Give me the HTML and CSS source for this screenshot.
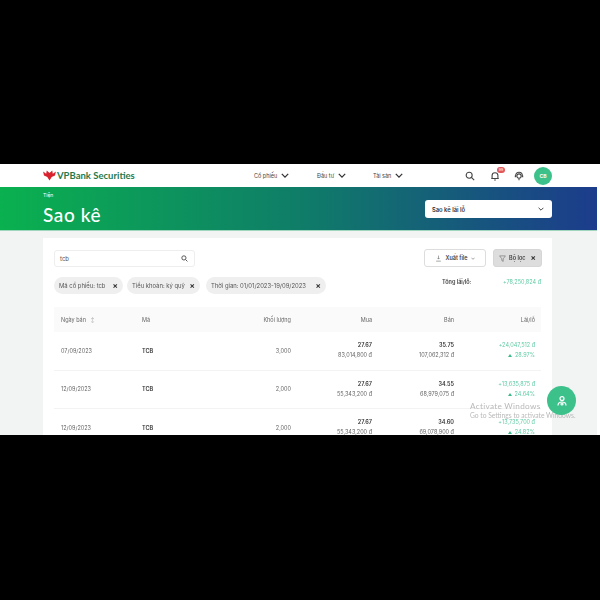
FILE: index.html
```html
<!DOCTYPE html>
<html lang="vi">
<head>
<meta charset="utf-8">
<title>Sao kê</title>
<link rel="stylesheet" href="styles.css">
</head>
<body>
<div class="frame">
  <div class="app">
    <header class="topbar">
      <div class="brand">
        <svg class="logo" viewBox="0 0 14 12"><path d="M7 11.500 4.600 7.600 1 6 0 1.500 3.400 4 4 .6 7 3.400 10 .6l.6 3.400L14 1.500 13 6 9.400 7.600Z" fill="#d8232f"/></svg>
        <span class="brand-name">VPBank Securities</span>
      </div>
      <nav class="menu">
        <span class="menu-item menu-a">Cổ phiếu <svg class="chev" viewBox="0 0 10 6"><path d="M1 1l4 4 4-4"/></svg></span>
        <span class="menu-item menu-b">Đầu tư <svg class="chev" viewBox="0 0 10 6"><path d="M1 1l4 4 4-4"/></svg></span>
        <span class="menu-item">Tài sản <svg class="chev" viewBox="0 0 10 6"><path d="M1 1l4 4 4-4"/></svg></span>
      </nav>
      <div class="tools">
        <svg class="tool" viewBox="0 0 12 12"><circle cx="5" cy="5" r="3.600"/><path d="M8 8l3 3"/></svg>
        <span class="bell">
          <svg class="tool" viewBox="0 0 12 12"><path d="M2.500 9V5.500a3.500 3.500 0 0 1 7 0V9ZM1.500 9h9M5 10.800h2"/></svg>
          <span class="badge">99</span>
        </span>
        <svg class="tool" viewBox="0 0 12 12"><path d="M2 7V5.500a4 4 0 0 1 8 0V7"/><circle cx="6" cy="6" r="2.600"/><path d="M1.600 5.500v2M10.400 5.500v2M6 9v2"/></svg>
        <span class="avatar">CB</span>
      </div>
    </header>

    <section class="hero">
      <div>
        <div class="crumb">Tiện</div>
        <h1 class="title">Sao kê</h1>
      </div>
      <div class="select">Sao kê lãi lỗ <svg class="chev-small" viewBox="0 0 10 6"><path d="M1 1l4 4 4-4"/></svg></div>
    </section>

    <main class="content">
      <div class="card">
        <div class="toolbar">
          <div class="search">
            <span>tcb</span>
            <svg class="search-icon" viewBox="0 0 12 12"><circle cx="5" cy="5" r="3.600"/><path d="M8 8l3 3"/></svg>
          </div>
          <div class="actions">
            <button class="btn"><svg class="btn-icon" viewBox="0 0 12 12"><path d="M6 1v6M4 5l2 2 2-2M2 10.500h8"/></svg>Xuất file <svg class="chev-tiny" viewBox="0 0 10 6"><path d="M1 1l4 4 4-4"/></svg></button>
            <button class="btn btn-filter"><svg class="btn-icon" viewBox="0 0 12 12"><path d="M1 1.500h10L7.200 6.500V11L4.800 9.500v-3Z"/></svg>Bộ lọc <span class="x">×</span></button>
          </div>
        </div>
        <div class="filters">
          <div class="chips">
            <span class="chip chip-a">Mã cổ phiếu: tcb <span class="x">×</span></span>
            <span class="chip chip-b">Tiểu khoản: ký quỹ <span class="x">×</span></span>
            <span class="chip chip-c">Thời gian: 01/01/2023-19/09/2023 <span class="x">×</span></span>
          </div>
          <div class="total"><b>Tổng lãi/lỗ:</b><span class="gain">+78,250,824 đ</span></div>
        </div>
        <div class="table">
          <div class="row head">
            <span>Ngày bán <span class="sort">↕</span></span><span>Mã</span><span class="r">Khối lượng</span><span class="r">Mua</span><span class="r">Bán</span><span class="r">Lãi/lỗ</span>
          </div>
          <div class="row">
            <span>07/09/2023</span><b>TCB</b><span class="r">3,000</span>
            <span class="r two"><b>27.67</b><span>83,014,800 đ</span></span>
            <span class="r two"><b>35.75</b><span>107,062,312 đ</span></span>
            <span class="r two gain"><span>+24,047,512 đ</span><span><i class="up"></i>28.97%</span></span>
          </div>
          <div class="row">
            <span>12/09/2023</span><b>TCB</b><span class="r">2,000</span>
            <span class="r two"><b>27.67</b><span>55,343,200 đ</span></span>
            <span class="r two"><b>34.55</b><span>68,979,075 đ</span></span>
            <span class="r two gain"><span>+13,635,875 đ</span><span><i class="up"></i>24.64%</span></span>
          </div>
          <div class="row">
            <span>12/09/2023</span><b>TCB</b><span class="r">2,000</span>
            <span class="r two"><b>27.67</b><span>55,343,200 đ</span></span>
            <span class="r two"><b>34.60</b><span>69,078,900 đ</span></span>
            <span class="r two gain"><span>+13,735,700 đ</span><span><i class="up"></i>24.82%</span></span>
          </div>
        </div>
      </div>
    </main>

    <div class="watermark">
      <div class="wm-1">Activate Windows</div>
      <div class="wm-2">Go to Settings to activate Windows.</div>
    </div>
    <div class="fab"><svg viewBox="0 0 12 12"><circle cx="6" cy="3.600" r="2"/><path d="M2 10.500c0-2 1.600-3.500 4-3.500s4 1.500 4 3.500"/><circle cx="6" cy="9" r="1"/></svg></div>
  </div>
</div>
</body>
</html>
```
FILE: styles.css
```css
* { box-sizing: border-box; }
html, body { margin: 0; height: 600px; background: #000; overflow: hidden; }
body { padding-top: 164px; font-family: "Inter", "Noto Sans", sans-serif; color: #444; }
.frame { width: 600px; height: 271px; background: #fff; overflow: hidden; position: relative; }
.app { width: 597px; height: 271px; position: relative; filter: blur(0.55px); }

.topbar { height: 23px; display: flex; align-items: center; padding-left: 43px; background: #fff; }
.brand { width: 211px; display: flex; align-items: center; gap: 1px; }
.logo { width: 13px; height: 11px; }
.brand-name { font-family: "Lato", sans-serif; font-size: 9.500px; font-weight: 700; color: #1f7a4d; white-space: nowrap; }
.menu { display: flex; font-size: 5.500px; color: #444; }
.menu-item { display: flex; align-items: center; gap: 4px; white-space: nowrap; }
.menu-a { width: 63px; }
.menu-b { width: 56px; }
.chev { width: 8px; height: 5px; fill: none; stroke: #333; stroke-width: 1.600; }
.tools { margin-left: auto; margin-right: 45px; display: flex; align-items: center; }
.tool { width: 10px; height: 10px; fill: none; stroke: #444; stroke-width: 1.300; }
.bell { position: relative; margin-left: 15px; margin-right: 14px; display: flex; }
.badge { position: absolute; top: -4px; right: -5px; width: 8px; height: 6px; border-radius: 3px; background: #e2585a; color: #fff; font-size: 3.500px; line-height: 6px; text-align: center; }
.avatar { width: 18px; height: 18px; margin-left: 10px; border-radius: 50%; background: #3cc18b; color: #fff; font-size: 5px; font-weight: 700; line-height: 18px; text-align: center; }

.hero { height: 44px; display: flex; justify-content: space-between; padding: 4px 45px 0 43px; background: linear-gradient(90deg, #0ab14f 0%, #0f7d68 50%, #1c3c8c 100%); border-bottom: 1px solid #9fd6bd; color: #fff; }
.crumb { font-size: 5px; line-height: 8px; }
.title { margin: 5px 0 0; font-family: "Lato", sans-serif; font-size: 19px; line-height: 22px; font-weight: 500; letter-spacing: .6px; }
.select { width: 127px; height: 18px; margin-top: 9px; padding: 0 8px 0 7px; display: flex; align-items: center; justify-content: space-between; background: #fff; border-radius: 3px; font-size: 5.800px; font-weight: 600; color: #333; }
.chev-small { width: 6px; height: 4px; fill: none; stroke: #333; stroke-width: 1.500; }

.content { height: 204px; padding: 7px 45px 0 43px; background: #f2f3f3; }
.card { height: 220px; background: #fff; padding: 11px 11px 0; }
.toolbar { display: flex; justify-content: space-between; align-items: center; height: 18px; }
.search { width: 141px; height: 17px; display: flex; align-items: center; justify-content: space-between; padding: 0 6px 0 5px; border: 1px solid #eee; border-radius: 3px; font-size: 6px; color: #555; }
.search-icon { width: 7px; height: 7px; fill: none; stroke: #444; stroke-width: 1.500; }
.actions { display: flex; gap: 7px; margin-right: -1px; }
.btn { height: 18px; display: flex; align-items: center; justify-content: center; gap: 3px; border: 1px solid #ddd; border-radius: 3px; background: #fff; font: 600 5.500px "Inter", sans-serif; color: #444; padding: 0; width: 62px; }
.btn-filter { width: 49px; background: #ddd; border-color: #d6d6d6; }
.btn-icon { width: 7px; height: 7px; fill: none; stroke: #666; stroke-width: 1; }
.chev-tiny { width: 4px; height: 3px; fill: none; stroke: #666; stroke-width: 1.500; }
.x { font-size: 8px; line-height: 6px; font-weight: 700; color: #333; margin-left: 2px; }

.filters { display: flex; justify-content: space-between; margin-top: 10px; height: 30px; }
.chips { display: flex; gap: 4px; }
.chip { height: 17px; padding: 0 5px; display: flex; align-items: center; justify-content: space-between; border-radius: 9px; background: #efefef; font-size: 5.900px; color: #555; white-space: nowrap; }
.chip-a { width: 69px; }
.chip-b { width: 73px; }
.chip-c { width: 120px; margin-left: 2px; }
.total { display: flex; width: 99px; justify-content: space-between; padding-top: 1px; font-size: 5.500px; line-height: 9px; color: #444; }
.total b { font-weight: 600; }
.gain { color: #5fcba3; font-weight: 400; }

.table { font-size: 5.500px; color: #666; }
.row { display: grid; grid-template-columns: 81px 60px 89px 81px 82px 81px; align-items: center; height: 38.500px; padding: 0 6px 0 7px; border-bottom: 1px solid #f3f3f3; }
.row b { color: #333; font-weight: 600; }
.head { height: 25px; background: #fafafa; border-bottom: 0; }
.r { text-align: right; }
.sort { font-size: 5px; color: #aaa; margin-left: 3px; }
.two { display: flex; flex-direction: column; align-items: flex-end; gap: 3px; line-height: 7px; }
.up { display: inline-block; width: 0; height: 0; margin-right: 3px; border: 2.500px solid transparent; border-top: 0; border-bottom: 3px solid #3cb98b; }

.fab { position: absolute; left: 547px; top: 222px; width: 29px; height: 29px; border-radius: 50%; background: #3cc18b; display: flex; align-items: center; justify-content: center; }
.fab svg { width: 12px; height: 12px; fill: none; stroke: #fff; stroke-width: 1.200; }
.watermark { position: absolute; left: 470px; top: 237px; color: #b9b9b9; white-space: nowrap; }
.wm-1 { font-family: "Lato", sans-serif; font-size: 8.200px; line-height: 10px; letter-spacing: .3px; }
.wm-2 { font-family: "Lato", sans-serif; font-size: 6.700px; line-height: 9px; }
```
